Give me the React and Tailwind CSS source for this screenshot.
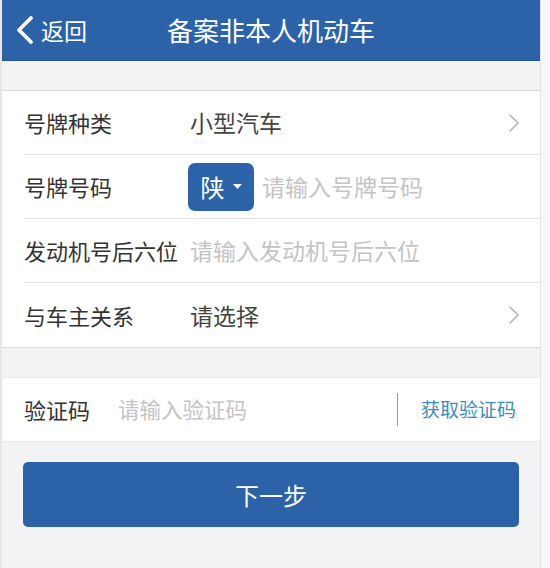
import React from "react";

const font = { fontFamily: '"Noto Sans CJK SC", "Noto Sans", sans-serif' };

const Chevron = () => (
  <svg width="12" height="20" viewBox="0 0 12 20" className="shrink-0">
    <path d="M2 2 L10 10 L2 18" fill="none" stroke="#b5b5b5" strokeWidth="1.6" strokeLinecap="round" strokeLinejoin="round" />
  </svg>
);

const Row = ({ children, last }) => (
  <div className={"ml-[22px] flex items-center h-[64px] pr-[20px] " + (last ? "" : "border-b border-[#e3e3e6]")}>
    {children}
  </div>
);

export default function App() {
  return (
    <div className="flex w-[550px] h-[568px] overflow-hidden bg-[#f3f3f6]" style={font}>
      <div className="w-[2px] bg-[#e6e6e9]" />
      <div className="w-[538px] flex flex-col">
        {/* Header */}
        <div className="h-[61px] bg-[#2c62a8] flex items-center relative border-b border-[#24528e]">
          <div className="flex items-center pl-[11px] text-white">
            <svg width="22" height="32" viewBox="0 0 22 32">
              <path d="M18 4 L6 16 L18 28" fill="none" stroke="white" strokeWidth="3.8" strokeLinecap="round" strokeLinejoin="round" />
            </svg>
            <span className="ml-[6px] text-[23px] leading-none">返回</span>
          </div>
          <div className="absolute inset-0 flex items-center justify-center pointer-events-none">
            <span className="text-white text-[26px] leading-none">备案非本人机动车</span>
          </div>
        </div>

        <div className="h-[29px]" />

        {/* Form group */}
        <div className="bg-white border-t border-b border-[#d9d9dc] text-[22px] text-[#333]">
          <Row>
            <span className="w-[166px]">号牌种类</span>
            <span className="flex-1 text-[23px] text-[#444]">小型汽车</span>
            <Chevron />
          </Row>
          <Row>
            <span className="w-[164px]">号牌号码</span>
            <div className="w-[66px] h-[48px] rounded-[7px] bg-[#2c62a8] flex items-center justify-center gap-[8px] text-white">
              <span className="text-[24px] leading-none">陕</span>
              <svg width="9" height="6" viewBox="0 0 9 6">
                <path d="M0 0 L9 0 L4.5 5 Z" fill="white" />
              </svg>
            </div>
            <span className="ml-[8px] text-[23px] text-[#c4c4c6]">请输入号牌号码</span>
          </Row>
          <Row>
            <span className="w-[166px] whitespace-nowrap">发动机号后六位</span>
            <span className="text-[23px] text-[#c4c4c6]">请输入发动机号后六位</span>
          </Row>
          <Row last>
            <span className="w-[166px]">与车主关系</span>
            <span className="flex-1 text-[23px] text-[#444]">请选择</span>
            <Chevron />
          </Row>
        </div>

        <div className="h-[29px]" />

        {/* Verification code */}
        <div className="bg-white h-[65px] flex items-center pl-[22px] pr-[24px] border-t border-b border-[#ececef]">
          <span className="w-[94px] text-[22px] text-[#333]">验证码</span>
          <span className="flex-1 text-[21.5px] text-[#c4c4c6]">请输入验证码</span>
          <div className="w-[1px] h-[33px] bg-[#999]" />
          <span className="ml-[23px] text-[19px] text-[#3b8cc2]">获取验证码</span>
        </div>

        {/* Next button */}
        <div className="px-[21px] pt-[20px]">
          <button className="w-full h-[65px] rounded-[5px] bg-[#2c62a8] text-white text-[24px] flex items-center justify-center">
            下一步
          </button>
        </div>
      </div>
      <div className="flex-1 bg-[#f8f8fa] border-l border-[#e2e2e5]" />
    </div>
  );
}
